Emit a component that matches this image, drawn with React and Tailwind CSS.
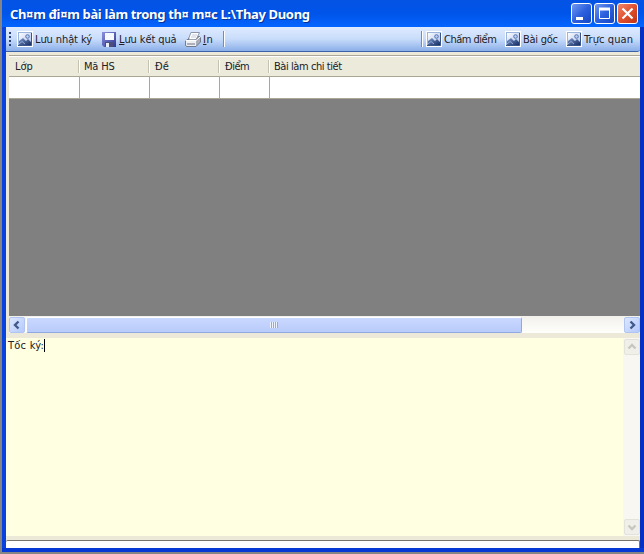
import React from 'react';

function PictureIcon() {
  return (
    <svg width="16" height="16" viewBox="0 0 16 16" className="shrink-0">
      <defs>
        <linearGradient id="sky" x1="0" y1="0" x2="1" y2="1">
          <stop offset="0" stopColor="#ffffff" />
          <stop offset="1" stopColor="#a4bdec" />
        </linearGradient>
        <linearGradient id="hill" x1="0" y1="0" x2="1" y2="1">
          <stop offset="0" stopColor="#7d98ca" />
          <stop offset="1" stopColor="#152c62" />
        </linearGradient>
      </defs>
      <rect width="16" height="16" fill="#fff" />
      <rect x="1.5" y="1.5" width="13" height="13" fill="url(#sky)" stroke="#9db4dd" />
      <path d="M2 14v-4l4-3 3 3 2-2 3 3v3z" fill="url(#hill)" />
      <path d="m2 13 3-2.5 3 2.5" stroke="#93acd9" fill="none" />
      <circle cx="10.5" cy="5.5" r="1.8" fill="#b9cdf2" stroke="#5873ae" />
      <path d="M1 14.5h13.5V2" stroke="#3c5589" fill="none" />
    </svg>
  );
}

function SaveIcon() {
  return (
    <svg width="14" height="15" viewBox="0 0 14 15" className="shrink-0">
      <defs>
        <linearGradient id="disk" x1="0" y1="0" x2="1" y2="1">
          <stop offset="0" stopColor="#8a91de" />
          <stop offset="1" stopColor="#30358e" />
        </linearGradient>
      </defs>
      <path d="M0 0h14v15H2l-2-2z" fill="url(#disk)" />
      <path d="M3 1h9v7H3z" fill="#f6f8ff" />
      <path d="M3 10h8v5H3z" fill="#4b4e7c" />
      <path d="M4 11h3v4H4z" fill="#e9edfa" />
    </svg>
  );
}

function PrintIcon() {
  return (
    <svg width="16" height="15" viewBox="0 0 16 15" className="shrink-0">
      <path d="M6 .5h8.5L11 8H3z" fill="#fff" stroke="#8c94a8" />
      <path d="M7 3h5M6 5h5" stroke="#c3c9d6" />
      <path d="M.5 9 4 6.5 3.5 8H11l3-4 1.5 2v4L11 14.5H1.5l-1-1z" fill="#a7adb9" stroke="#737a8a" />
      <path d="M1 9h10v5H2l-1-1z" fill="#eceef2" />
      <path d="M2 12h8" stroke="#6b7282" />
      <path d="M1 8.5h10l4-3.5" stroke="#fff" fill="none" />
    </svg>
  );
}

function Separator() {
  return <div className="h-4 w-[2px] shrink-0 border-l border-[#6a8ccb] bg-white" />;
}

function WindowButton({ close, children }) {
  return (
    <div
      className={
        'flex h-[21px] w-[21px] items-center justify-center rounded-[3px] border border-white bg-linear-to-br ' +
        (close ? 'from-[#ee8669] via-[#e1502d] to-[#be3415]' : 'from-[#7398f0] via-[#2d60de] to-[#1546c3]')
      }
    >
      <svg width="19" height="19" viewBox="0 0 19 19" fill="none" stroke="#fff">{children}</svg>
    </div>
  );
}

function ScrollButton({ d, disabled }) {
  return (
    <div
      className={
        'flex h-4 w-4 shrink-0 items-center justify-center rounded-[2px] border ' +
        (disabled ? 'border-[#e4e3da] bg-[#f0efe9]' : 'border-[#b1c5f5] bg-linear-to-br from-[#dce7ff] to-[#b5c9fa]')
      }
    >
      <svg width="14" height="14" viewBox="0 0 14 14" className="shrink-0">
        <path d={d} fill="none" stroke={disabled ? '#c8c7bf' : '#415a8c'} strokeWidth="2.4" />
      </svg>
    </div>
  );
}

function HeaderCell({ width, last, children }) {
  return (
    <div className={'flex shrink-0 items-center ' + width}>
      <span className="flex-1 whitespace-nowrap pl-[6px]">{children}</span>
      {!last && <div className="h-[13px] w-[2px] border-l border-[#c5c2b2] bg-white" />}
    </div>
  );
}

export default function App() {
  return (
    <div className="flex h-[554px] w-[644px] flex-col overflow-hidden border-b-2 border-l-2 border-[#858585] bg-[#0739d5] font-['DejaVu_Sans_Condensed','DejaVu_Sans',sans-serif] text-[11px] leading-[14px] text-[#202027]">
      <div className="flex h-[27px] shrink-0 items-center bg-linear-to-b from-[#0453e5] via-[#0054e9] to-[#0365ff] pl-2 pr-[6px]">
        <h1 className="flex-1 whitespace-nowrap font-['Noto_Sans',sans-serif] text-[13px] leading-4 font-bold tracking-[-0.34px] text-white [text-shadow:1px_1px_#073397]">
          Ch¤m đi¤m bài làm trong th¤ m¤c L:\Thay Duong
        </h1>
        <div className="flex gap-[2px]">
          <WindowButton><path d="M4 14.5h7" strokeWidth="3" /></WindowButton>
          <WindowButton><path d="M4.5 5v9.5h10V5" /><path d="M4 5h11" strokeWidth="3" /></WindowButton>
          <WindowButton close><path d="m4.5 4.5 10 10m0-10-10 10" strokeWidth="2.2" /></WindowButton>
        </div>
      </div>

      <div className="flex h-[521px] shrink-0 flex-col border-l-4 border-r-4 border-l-[#0842df] border-r-[#0431c4] bg-[#ece9d8]">
        <div className="flex h-[25px] shrink-0 items-center rounded-br-[3px] border-b border-[#3b62a8] bg-linear-to-b from-[#dfebff] via-[#c8dcfa] to-[#8bafe9] pl-[3px]">
          <div className="flex w-[3px] flex-col gap-[2px]">
            <i className="size-[2px] bg-[#27417a]" />
            <i className="size-[2px] bg-[#27417a]" />
            <i className="size-[2px] bg-[#27417a]" />
            <i className="size-[2px] bg-[#27417a]" />
          </div>
          <div className="ml-[5px] flex w-[85px] shrink-0 items-center gap-[2px] whitespace-nowrap tracking-[-0.1px]"><PictureIcon /><span className="pt-px">Lưu nhật ký</span></div>
          <div className="flex w-[83px] shrink-0 items-center gap-[3px] whitespace-nowrap tracking-[-0.1px]"><SaveIcon /><span className="pt-px"><u>L</u>ưu kết quả</span></div>
          <div className="flex w-[38px] shrink-0 items-center gap-[2px]"><PrintIcon /><span className="pt-px tracking-[0.5px]"><u>I</u>n</span></div>
          <Separator />
          <div className="flex-1" />
          <Separator />
          <div className="ml-[3px] flex w-[79px] shrink-0 items-center gap-[2px] whitespace-nowrap"><PictureIcon /><span className="pt-px tracking-[-0.5px]">Chấm điểm</span></div>
          <div className="flex w-[61px] shrink-0 items-center gap-[2px] whitespace-nowrap"><PictureIcon /><span className="pt-px tracking-[-0.25px]">Bài gốc</span></div>
          <div className="flex w-[74px] shrink-0 items-center gap-[2px] whitespace-nowrap"><PictureIcon /><span className="pt-px tracking-[0.1px]">Trực quan</span></div>
        </div>

        <div className="mt-[3px] ml-[3px] flex h-[278px] shrink-0 flex-col border-t border-[#aaa797] bg-[#808080]">
          <div className="flex h-[21px] shrink-0 border-t border-b border-t-white border-b-[#aaa797] bg-[#ebeadb]">
            <HeaderCell width="w-[71px]">Lớp</HeaderCell>
            <HeaderCell width="w-[70px]"><span className="-ml-[2px] tracking-[-0.2px]">Mã HS</span></HeaderCell>
            <HeaderCell width="w-[70px]"><span className="-ml-px">Đề</span></HeaderCell>
            <HeaderCell width="w-[50px]"><span className="-ml-px tracking-[-0.5px]">Điểm</span></HeaderCell>
            <HeaderCell width="w-[370px]" last><span className="-ml-[2px] tracking-[-0.43px]">Bài làm chi tiết</span></HeaderCell>
          </div>
          <div className="flex h-[22px] shrink-0 border-b border-[#aaa797] bg-white">
            <div className="w-[71px] border-r border-[#aaa797]" />
            <div className="w-[70px] border-r border-[#aaa797]" />
            <div className="w-[70px] border-r border-[#aaa797]" />
            <div className="w-[50px] border-r border-[#aaa797]" />
          </div>
          <div className="flex-1" />
          <div className="flex h-[17px] shrink-0 bg-linear-to-b from-[#f3f1ec] to-[#fefefb] pt-px">
            <ScrollButton d="M8.5 3.5 5 7l3.5 3.5" />
            <div className="ml-px flex h-4 w-[496px] items-center justify-center rounded-[2px] border border-white border-r-[#8eaae0] border-b-[#8eaae0] bg-linear-to-b from-[#c9d8ff] to-[#b9cbfa]">
              <i className="h-[6px] w-px bg-[#eef4ff]" /><i className="h-[6px] w-px bg-[#8caae6]" />
              <i className="h-[6px] w-px bg-[#eef4ff]" /><i className="h-[6px] w-px bg-[#8caae6]" />
              <i className="h-[6px] w-px bg-[#eef4ff]" /><i className="h-[6px] w-px bg-[#8caae6]" />
              <i className="h-[6px] w-px bg-[#eef4ff]" /><i className="h-[6px] w-px bg-[#8caae6]" />
            </div>
            <div className="flex-1" />
            <ScrollButton d="M5.5 3.5 9 7l-3.5 3.5" />
          </div>
        </div>

        <div className="mt-[5px] flex h-[198px] shrink-0 bg-[#ffffe1]">
          <div className="flex flex-1 items-start pt-px pl-[2px]">
            <span className="tracking-[0.25px]">Tốc ký:</span>
            <i className="h-[13px] w-px bg-black" />
          </div>
          <div className="flex w-[17px] flex-col items-center justify-between bg-[#f8f7f2] py-px">
            <ScrollButton disabled d="M3.5 8.5 7 5l3.5 3.5" />
            <ScrollButton disabled d="M3.5 5.5 7 9l3.5-3.5" />
          </div>
        </div>
        <div className="mt-1 h-2 shrink-0 rounded-t-[2px] border-t border-r border-[#77756d] bg-white" />
      </div>
      <div className="h-1 shrink-0 bg-[#0739d5]" />
    </div>
  );
}
